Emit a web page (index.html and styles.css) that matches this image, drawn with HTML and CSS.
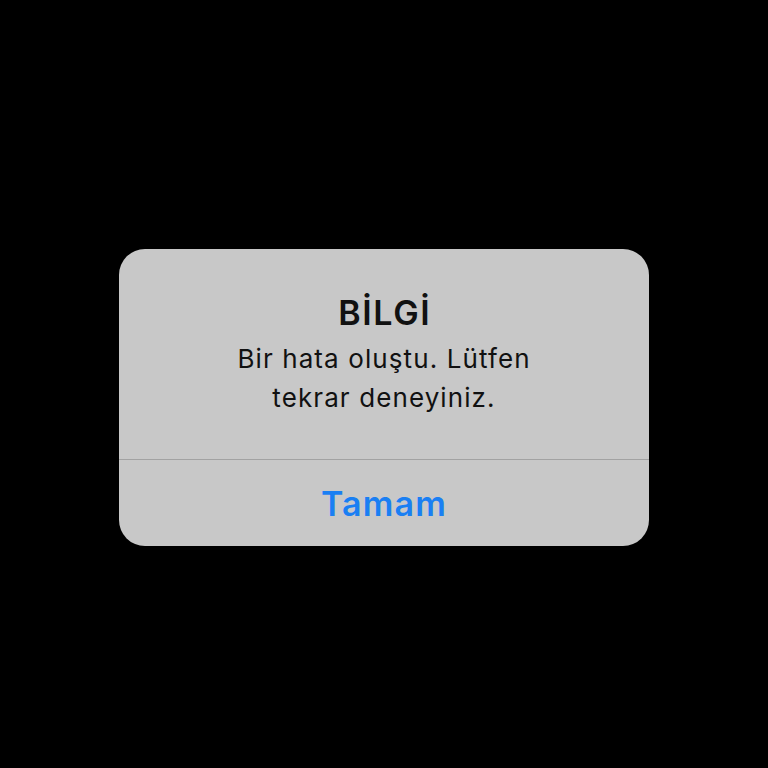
FILE: index.html
```html
<!DOCTYPE html>
<html lang="tr">
<head>
<meta charset="utf-8">
<link rel="stylesheet" href="styles.css">
</head>
<body>
<div class="alert">
  <div class="content">
    <div class="title">BİLGİ</div>
    <div class="message">Bir hata oluştu. Lütfen<br>tekrar deneyiniz.</div>
  </div>
  <div class="actions">
    <div class="button">Tamam</div>
  </div>
</div>
</body>
</html>
```

FILE: styles.css
```css
html, body {
  margin: 0;
  padding: 0;
  background: #000;
  width: 768px;
  height: 768px;
  overflow: hidden;
}
body {
  display: flex;
  flex-direction: column;
  align-items: center;
  padding-top: 249px;
  box-sizing: border-box;
  font-family: Inter, "Noto Sans", sans-serif;
}
.alert {
  width: 530px;
  height: 297px;
  background: #c8c8c8;
  border-radius: 26px;
  display: flex;
  flex-direction: column;
  overflow: hidden;
}
.content {
  height: 211px;
  border-bottom: 1px solid #a2a2a2;
  display: flex;
  flex-direction: column;
  align-items: center;
  text-align: center;
  padding-top: 42px;
  box-sizing: border-box;
}
.title {
  font-size: 34px;
  font-weight: 600;
  color: #111;
  line-height: 44px;
  letter-spacing: 1.6px;
  padding-left: 1.6px;
}
.message {
  font-size: 26px;
  color: #111;
  line-height: 39px;
  margin-top: 4px;
  letter-spacing: 1.1px;
}
.actions {
  flex: 1;
  display: flex;
  align-items: center;
  justify-content: center;
}
.button {
  font-size: 34px;
  font-weight: 600;
  color: #1a7ff3;
  letter-spacing: 1.2px;
}
```
